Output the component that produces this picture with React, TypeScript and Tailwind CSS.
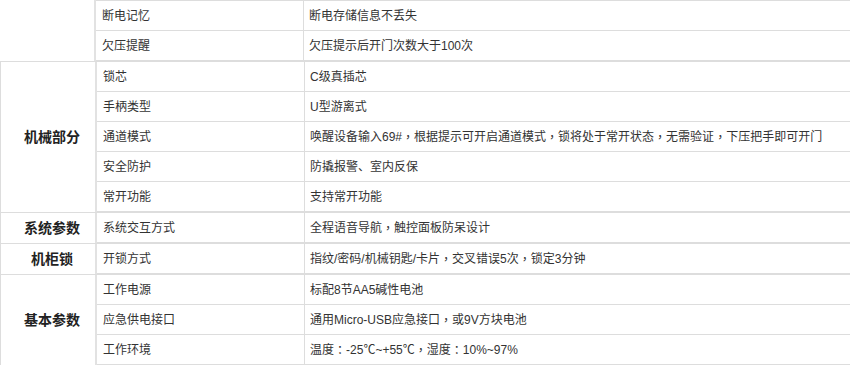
const groups: { label: string; rows: [string, string][]; first?: boolean }[] = [
  {
    label: '',
    first: true,
    rows: [
      ['断电记忆', '断电存储信息不丢失'],
      ['欠压提醒', '欠压提示后开门次数大于100次'],
    ],
  },
  {
    label: '机械部分',
    rows: [
      ['锁芯', 'C级真插芯'],
      ['手柄类型', 'U型游离式'],
      ['通道模式', '唤醒设备输入69#，根据提示可开启通道模式，锁将处于常开状态，无需验证，下压把手即可开门'],
      ['安全防护', '防撬报警、室内反保'],
      ['常开功能', '支持常开功能'],
    ],
  },
  {
    label: '系统参数',
    rows: [['系统交互方式', '全程语音导航，触控面板防呆设计']],
  },
  {
    label: '机柜锁',
    rows: [['开锁方式', '指纹/密码/机械钥匙/卡片，交叉错误5次，锁定3分钟']],
  },
  {
    label: '基本参数',
    rows: [
      ['工作电源', '标配8节AA5碱性电池'],
      ['应急供电接口', '通用Micro-USB应急接口，或9V方块电池'],
      ['工作环境', '温度：-25℃~+55℃，湿度：10%~97%'],
    ],
  },
];

// centred full-width comma / colon, as in the original page
function Value({ text }: { text: string }) {
  const parts = text.split(/([，：])/);
  return (
    <>
      {parts.map((part, i) =>
        part === '，' || part === '：' ? (
          <span key={i} style={{ fontFamily: '"Noto Sans CJK TC", sans-serif' }}>
            {part}
          </span>
        ) : (
          <span key={i}>{part}</span>
        ),
      )}
    </>
  );
}

export default function App() {
  return (
    <div
      className="w-[850px] bg-white text-[12px] text-[#333333]"
      style={{ fontFamily: '"Liberation Sans", "Noto Sans CJK SC", sans-serif' }}
    >
      {groups.map((group, gi) => (
        <div
          key={gi}
          className={`flex border-b border-[#dddddd] ${group.first ? '' : 'border-l'}`}
        >
          <div className="w-[96px] shrink-0 border-r-2 border-[#e2e2e2] flex items-center justify-center pl-[8px] text-[14px] font-bold text-[#222222]">
            {group.label}
          </div>
          <div className={`flex-1 flex flex-col ${group.first ? 'border-t border-[#dddddd]' : ''}`}>
            {group.rows.map(([name, value], ri) => (
              <div key={ri} className="flex h-[30px] border-b border-[#dddddd]">
                <div className="w-[208px] shrink-0 border-r border-[#dddddd] pl-[6px] flex items-center">
                  {name}
                </div>
                <div className="flex-1 pl-[5px] flex items-center whitespace-nowrap">
                  <Value text={value} />
                </div>
              </div>
            ))}
          </div>
        </div>
      ))}
    </div>
  );
}
